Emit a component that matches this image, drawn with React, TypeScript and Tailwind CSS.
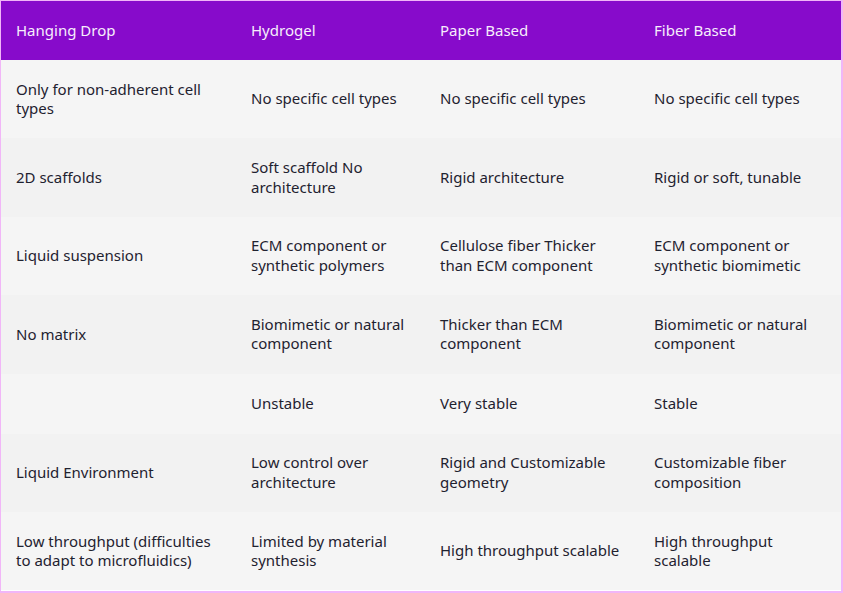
const headers = ["Hanging Drop", "Hydrogel", "Paper Based", "Fiber Based"];

const rows: string[][] = [
  ["Only for non-adherent cell types", "No specific cell types", "No specific cell types", "No specific cell types"],
  ["2D scaffolds", "Soft scaffold No architecture", "Rigid architecture", "Rigid or soft, tunable"],
  ["Liquid suspension", "ECM component or synthetic polymers", "Cellulose fiber Thicker than ECM component", "ECM component or synthetic biomimetic"],
  ["No matrix", "Biomimetic or natural component", "Thicker than ECM component", "Biomimetic or natural component"],
  ["", "Unstable", "Very stable", "Stable"],
  ["Liquid Environment", "Low control over architecture", "Rigid and Customizable geometry", "Customizable fiber composition"],
  ["Low throughput (difficulties to adapt to microfluidics)", "Limited by material synthesis", "High throughput scalable", "High throughput scalable"],
];

export default function App() {
  return (
    <div
      className="w-[843px] h-[593px] bg-white border-l border-t border-r-2 border-b-2 border-[#f1b6f8] overflow-hidden text-[15px] leading-[19.5px]"
      style={{ fontFamily: "'Noto Sans', sans-serif" }}
    >
      <div className="grid grid-cols-[235px_189px_214px_1fr] bg-[#870bcb] text-[#f6eefb]">
        {headers.map((h) => (
          <div key={h} className="px-[15px] py-[19.75px]">
            {h}
          </div>
        ))}
      </div>
      {rows.map((r, i) => (
        <div
          key={i}
          className={
            "grid grid-cols-[235px_189px_214px_1fr] items-center min-h-[60px] text-[#1f2230] " +
            (i % 2 === 0 ? "bg-[#f5f5f5]" : "bg-[#f2f2f2]")
          }
        >
          {r.map((c, j) => (
            <div key={j} className="px-[15px] py-[19.7px]">
              {c}
            </div>
          ))}
        </div>
      ))}
    </div>
  );
}
